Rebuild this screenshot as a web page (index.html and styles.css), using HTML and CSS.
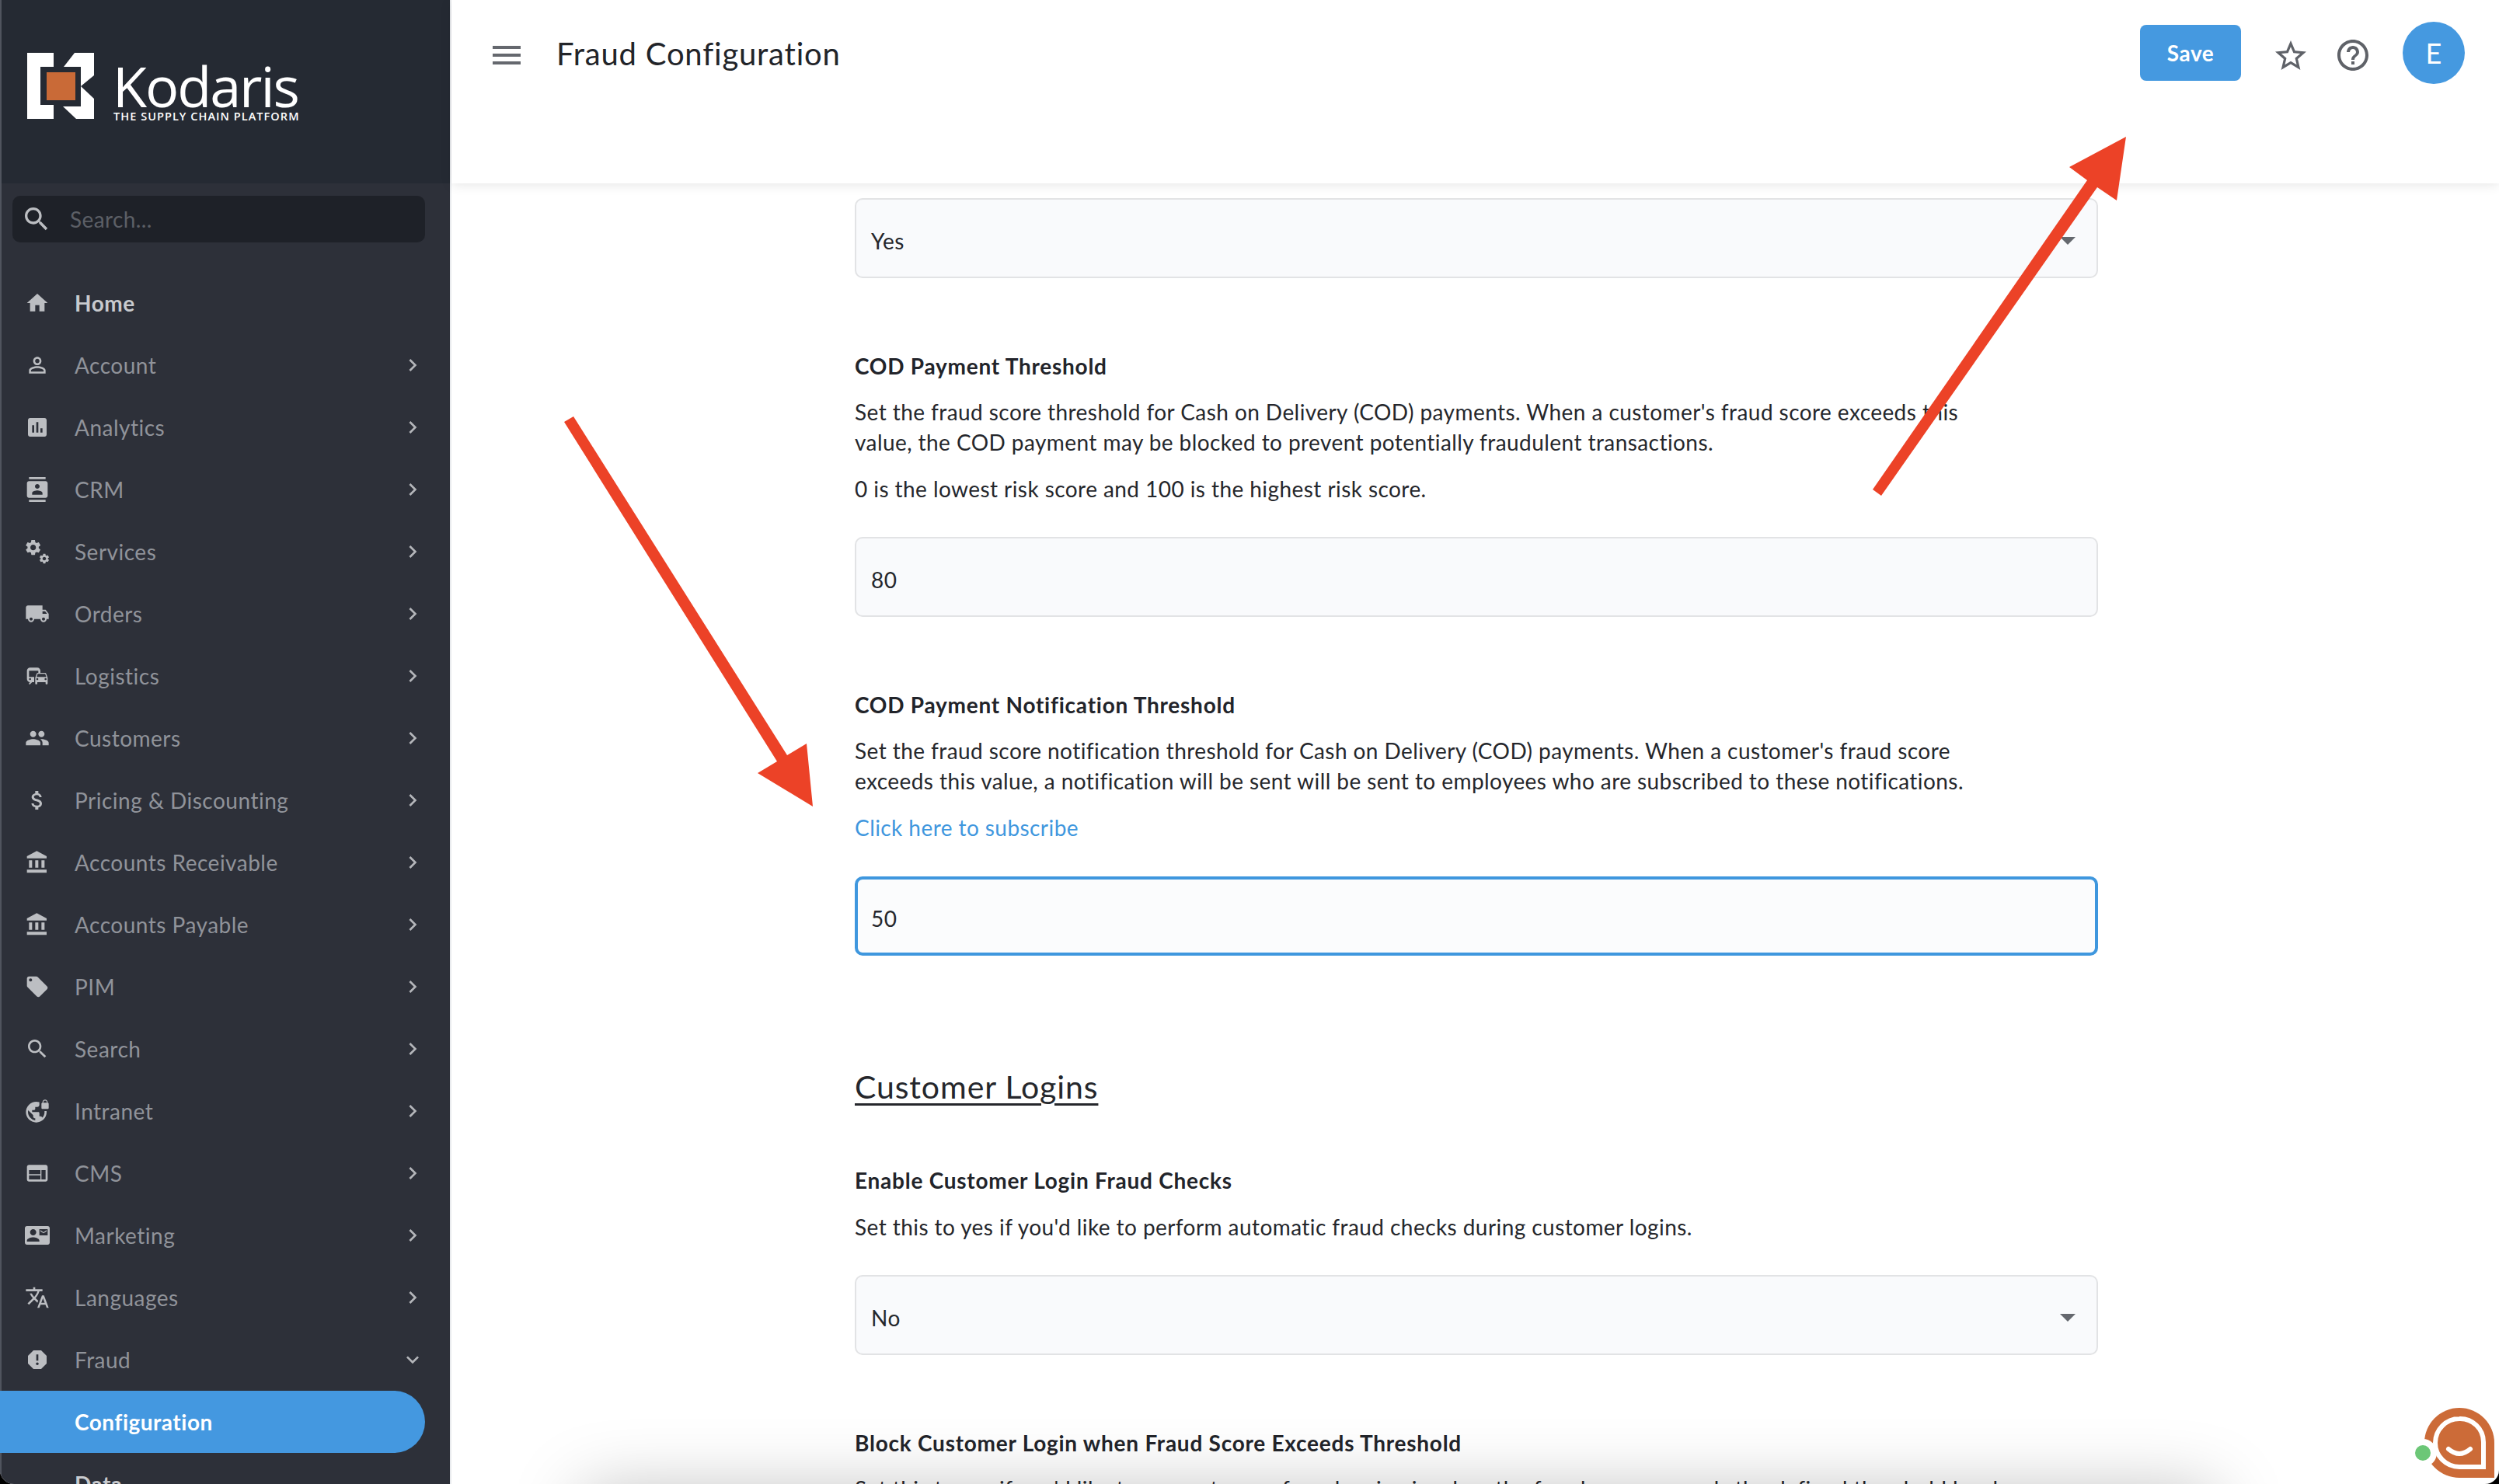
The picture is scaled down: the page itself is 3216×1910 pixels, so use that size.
FILE: index.html
```html
<!DOCTYPE html>
<html lang="en">
<head>
<meta charset="utf-8">
<title>Fraud Configuration</title>
<link rel="stylesheet" href="styles.css">
</head>
<body>
<svg class="defs" width="0" height="0" aria-hidden="true">
  <symbol id="i-home" viewBox="0 0 24 24"><path d="M10 20v-6h4v6h5v-8h3L12 3 2 12h3v8z"/></symbol>
  <symbol id="i-person" viewBox="0 0 24 24"><path d="M12 5.9c1.16 0 2.1.94 2.1 2.1s-.94 2.1-2.1 2.1S9.9 9.16 9.9 8s.94-2.1 2.1-2.1m0 9c2.97 0 6.1 1.46 6.1 2.1v1.1H5.9V17c0-.64 3.13-2.1 6.1-2.1M12 4C9.79 4 8 5.79 8 8s1.79 4 4 4 4-1.79 4-4-1.79-4-4-4zm0 9c-2.67 0-8 1.34-8 4v3h16v-3c0-2.66-5.33-4-8-4z"/></symbol>
  <symbol id="i-chart" viewBox="0 0 24 24"><path d="M19 3H5c-1.1 0-2 .9-2 2v14c0 1.1.9 2 2 2h14c1.1 0 2-.9 2-2V5c0-1.1-.9-2-2-2zM9 17H7v-7h2v7zm4 0h-2V7h2v10zm4 0h-2v-4h2v4z"/></symbol>
  <symbol id="i-contacts" viewBox="0 0 24 24"><path d="M20 0H4v2h16V0zM4 24h16v-2H4v2zM20 4H4c-1.1 0-2 .9-2 2v12c0 1.1.9 2 2 2h16c1.1 0 2-.9 2-2V6c0-1.1-.9-2-2-2zm-8 2.75c1.24 0 2.25 1.01 2.25 2.25s-1.01 2.25-2.25 2.25S9.75 10.24 9.75 9 10.76 6.75 12 6.75zM17 17H7v-1.5c0-1.67 3.33-2.5 5-2.5s5 .83 5 2.5V17z"/></symbol>
  <symbol id="i-gear" viewBox="0 0 24 24"><path d="M19.14 12.94c.04-.3.06-.61.06-.94 0-.32-.02-.64-.07-.94l2.03-1.58c.18-.14.23-.41.12-.61l-1.92-3.32c-.12-.22-.37-.29-.59-.22l-2.39.96c-.5-.38-1.03-.7-1.62-.94l-.36-2.54c-.04-.24-.24-.41-.48-.41h-3.84c-.24 0-.43.17-.47.41l-.36 2.54c-.59.24-1.13.57-1.62.94l-2.39-.96c-.22-.08-.47 0-.59.22L2.74 8.87c-.12.21-.08.47.12.61l2.03 1.58c-.05.3-.09.63-.09.94s.02.64.07.94l-2.03 1.58c-.18.14-.23.41-.12.61l1.92 3.32c.12.22.37.29.59.22l2.39-.96c.5.38 1.03.7 1.62.94l.36 2.54c.05.24.24.41.48.41h3.84c.24 0 .44-.17.47-.41l.36-2.54c.59-.24 1.13-.56 1.62-.94l2.39.96c.22.08.47 0 .59-.22l1.92-3.32c.12-.22.07-.47-.12-.61l-2.01-1.58zM12 15.6c-1.98 0-3.6-1.62-3.6-3.6s1.62-3.6 3.6-3.6 3.6 1.62 3.6 3.6-1.62 3.6-3.6 3.6z"/></symbol>
  <symbol id="i-gears" viewBox="0 0 24 24"><use href="#i-gear" x="-1" y="-1" width="18" height="18"/><use href="#i-gear" x="13" y="13" width="11.5" height="11.5"/></symbol>
  <symbol id="i-truck" viewBox="0 0 24 24"><path d="M20 8h-3V4H3c-1.1 0-2 .9-2 2v11h2c0 1.66 1.34 3 3 3s3-1.34 3-3h6c0 1.66 1.34 3 3 3s3-1.34 3-3h2v-5l-3-4zM6 18.5c-.83 0-1.5-.67-1.5-1.5s.67-1.5 1.5-1.5 1.5.67 1.5 1.5-.67 1.5-1.5 1.5zm13.5-9l1.96 2.5H17V9.5h2.5zm-1.5 9c-.83 0-1.5-.67-1.5-1.5s.67-1.5 1.5-1.5 1.5.67 1.5 1.5-.67 1.5-1.5 1.5z"/></symbol>
  <symbol id="i-commute" viewBox="0 0 24 24"><path d="M12 4H5C3.34 4 2 5.34 2 7v8c0 1.66 1.34 3 3 3l-1 1v1h1l2-2h2v-5H4V6.99L13 7v2h2V7c0-1.66-1.34-3-3-3zM5 14c.55 0 1 .45 1 1s-.45 1-1 1-1-.45-1-1 .45-1 1-1zm15.57-4.34c-.14-.4-.52-.66-.97-.66h-7.19c-.46 0-.83.26-.98.66L10 13.77l.01 5.51c0 .38.31.72.69.72h.62c.38 0 .68-.38.68-.76V18h8v1.24c0 .38.31.76.69.76h.61c.38 0 .69-.34.69-.72l.01-1.37v-4.14l-1.43-4.11zm-8.16.34h7.19l1.03 3h-9.25l1.03-3zM12 16c-.55 0-1-.45-1-1s.45-1 1-1 1 .45 1 1-.45 1-1 1zm8 0c-.55 0-1-.45-1-1s.45-1 1-1 1 .45 1 1-.45 1-1 1z"/></symbol>
  <symbol id="i-people" viewBox="0 0 24 24"><path d="M16 11c1.66 0 2.99-1.34 2.99-3S17.66 5 16 5c-1.66 0-3 1.34-3 3s1.34 3 3 3zm-8 0c1.66 0 2.99-1.34 2.99-3S9.66 5 8 5C6.34 5 5 6.34 5 8s1.34 3 3 3zm0 2c-2.33 0-7 1.17-7 3.5V19h14v-2.5c0-2.33-4.67-3.5-7-3.5zm8 0c-.29 0-.62.02-.97.05 1.16.84 1.97 1.97 1.97 3.45V19h6v-2.5c0-2.33-4.67-3.5-7-3.5z"/></symbol>
  <symbol id="i-money" viewBox="0 0 24 24"><path d="M11.8 10.9c-2.27-.59-3-1.2-3-2.15 0-1.09 1.01-1.85 2.7-1.85 1.78 0 2.44.85 2.5 2.1h2.21c-.07-1.72-1.12-3.3-3.21-3.81V3h-3v2.16c-1.94.42-3.5 1.68-3.5 3.61 0 2.31 1.91 3.46 4.7 4.13 2.5.6 3 1.48 3 2.41 0 .69-.49 1.79-2.7 1.79-2.06 0-2.87-.92-2.98-2.1h-2.2c.12 2.19 1.76 3.42 3.68 3.83V21h3v-2.15c1.95-.37 3.5-1.5 3.5-3.55 0-2.84-2.43-3.81-4.7-4.4z"/></symbol>
  <symbol id="i-bank" viewBox="0 0 24 24"><path d="M4 10v7h3v-7H4zm6 0v7h3v-7h-3zM2 22h19v-3H2v3zm14-12v7h3v-7h-3zm-4.500-9L2 6v2h19V6l-9.500-5z"/></symbol>
  <symbol id="i-tag" viewBox="0 0 24 24"><path d="M21.41 11.58l-9-9C12.05 2.22 11.55 2 11 2H4c-1.100 0-2 .9-2 2v7c0 .55.22 1.050.59 1.420l9 9c.36.36.86.58 1.410.58.55 0 1.050-.22 1.410-.59l7-7c.37-.36.59-.86.59-1.410 0-.55-.23-1.060-.59-1.420zM5.500 7C4.670 7 4 6.330 4 5.500S4.670 4 5.500 4 7 4.670 7 5.500 6.330 7 5.500 7z"/></symbol>
  <symbol id="i-search" viewBox="0 0 24 24"><path d="M15.500 14h-.79l-.28-.27C15.410 12.590 16 11.110 16 9.500 16 5.910 13.090 3 9.500 3S3 5.910 3 9.500 5.910 16 9.500 16c1.610 0 3.090-.59 4.230-1.570l.27.28v.79l5 4.990L20.490 19l-4.990-5zm-6 0C7.010 14 5 11.990 5 9.500S7.010 5 9.500 5 14 7.010 14 9.500 11.990 14 9.500 14z"/></symbol>
  <symbol id="i-vpn" viewBox="0 0 24 24"><path d="M22 4v-.5C22 2.120 20.880 1 19.500 1S17 2.120 17 3.500V4c-.55 0-1 .45-1 1v4c0 .55.45 1 1 1h5c.55 0 1-.45 1-1V5c0-.55-.45-1-1-1zm-.8 0h-3.400v-.5c0-.94.76-1.700 1.700-1.700s1.700.76 1.700 1.700V4zm-2.280 8c.04.33.08.66.08 1 0 2.080-.8 3.970-2.100 5.390-.26-.81-1-1.390-1.900-1.390h-1v-3c0-.55-.45-1-1-1H7v-2h2c.55 0 1-.45 1-1V8h2c1.100 0 2-.9 2-2V3.460c-.95-.3-1.950-.46-3-.46C5.480 3 1 7.480 1 13s4.480 10 10 10 10-4.480 10-10c0-.34-.02-.67-.05-1h-2.030zM10 20.930c-3.950-.49-7-3.850-7-7.930 0-.62.08-1.210.21-1.790L8 16v1c0 1.100.9 2 2 2v1.930z"/></symbol>
  <symbol id="i-web" viewBox="0 0 24 24"><path d="M20 4H4c-1.100 0-2 .9-2 2v12c0 1.100.9 2 2 2h16c1.100 0 2-.9 2-2V6c0-1.100-.9-2-2-2zm-5 14H4v-4h11v4zm0-5H4V9h11v4zm5 5h-4V9h4v9z"/></symbol>
  <symbol id="i-mail" viewBox="0 0 24 24"><path d="M21 8V7l-3 2-3-2v1l3 2 3-2zm1-5H2C.9 3 0 3.900 0 5v14c0 1.100.9 2 2 2h20c1.100 0 1.990-.9 1.990-2L24 5c0-1.100-.9-2-2-2zM8 6c1.660 0 3 1.340 3 3s-1.340 3-3 3-3-1.340-3-3 1.340-3 3-3zm6 12H2v-1c0-2 4-3.100 6-3.100s6 1.100 6 3.100v1zm8-6h-8V6h8v6z"/></symbol>
  <symbol id="i-translate" viewBox="0 0 24 24"><path d="M12.870 15.070l-2.540-2.510.03-.03c1.740-1.940 2.980-4.170 3.710-6.530H17V4h-7V2H8v2H1v1.990h11.170C11.500 7.920 10.440 9.750 9 11.350 8.070 10.320 7.300 9.190 6.690 8h-2c.73 1.630 1.730 3.170 2.980 4.560l-5.090 5.020L4 19l5-5 3.110 3.110.76-2.040zM18.500 10h-2L12 22h2l1.120-3h4.750L21 22h2l-4.500-12zm-2.620 7l1.620-4.330L19.120 17h-3.240z"/></symbol>
  <symbol id="i-report" viewBox="0 0 24 24"><path d="M15.730 3H8.270L3 8.270v7.460L8.270 21h7.460L21 15.730V8.270L15.730 3zM12 17.300c-.72 0-1.300-.58-1.300-1.300 0-.72.58-1.300 1.300-1.300.72 0 1.300.58 1.300 1.300 0 .72-.58 1.300-1.300 1.300zm1-4.300h-2V7h2v6z"/></symbol>
  <symbol id="i-right" viewBox="0 0 24 24"><path d="M10 6L8.590 7.410 13.170 12l-4.580 4.590L10 18l6-6z"/></symbol>
  <symbol id="i-down" viewBox="0 0 24 24"><path d="M16.590 8.590L12 13.170 7.410 8.590 6 10l6 6 6-6z"/></symbol>
</svg>

<div class="window">
  <aside class="sidebar">
    <div class="brand">
      <svg class="brand-mark" viewBox="0 0 86 85" aria-hidden="true">
        <path class="mark-white" d="M0 0H34V18H17V67H34V85H0Z"/>
        <path class="mark-white" d="M47 18L61 0H86V29L69 43L86 59V85H63L46 69H69V18Z"/>
        <rect class="mark-orange" x="25" y="25" width="37" height="36"/>
      </svg>
      <div class="brand-text">
        <div class="brand-name">Kodaris</div>
        <div class="brand-tag">THE SUPPLY CHAIN PLATFORM</div>
      </div>
    </div>
    <div class="side-body">
      <div class="side-search">
        <svg class="side-search-icon"><use href="#i-search"/></svg>
        <span class="side-search-text">Search...</span>
      </div>
      <nav class="nav">
        <a class="nav-item nav-home"><svg class="nav-icon"><use href="#i-home"/></svg><span class="nav-label">Home</span></a>
        <a class="nav-item"><svg class="nav-icon"><use href="#i-person"/></svg><span class="nav-label">Account</span><svg class="nav-arrow"><use href="#i-right"/></svg></a>
        <a class="nav-item"><svg class="nav-icon"><use href="#i-chart"/></svg><span class="nav-label">Analytics</span><svg class="nav-arrow"><use href="#i-right"/></svg></a>
        <a class="nav-item"><svg class="nav-icon"><use href="#i-contacts"/></svg><span class="nav-label">CRM</span><svg class="nav-arrow"><use href="#i-right"/></svg></a>
        <a class="nav-item"><svg class="nav-icon"><use href="#i-gears"/></svg><span class="nav-label">Services</span><svg class="nav-arrow"><use href="#i-right"/></svg></a>
        <a class="nav-item"><svg class="nav-icon"><use href="#i-truck"/></svg><span class="nav-label">Orders</span><svg class="nav-arrow"><use href="#i-right"/></svg></a>
        <a class="nav-item"><svg class="nav-icon"><use href="#i-commute"/></svg><span class="nav-label">Logistics</span><svg class="nav-arrow"><use href="#i-right"/></svg></a>
        <a class="nav-item"><svg class="nav-icon"><use href="#i-people"/></svg><span class="nav-label">Customers</span><svg class="nav-arrow"><use href="#i-right"/></svg></a>
        <a class="nav-item"><svg class="nav-icon"><use href="#i-money"/></svg><span class="nav-label">Pricing &amp; Discounting</span><svg class="nav-arrow"><use href="#i-right"/></svg></a>
        <a class="nav-item"><svg class="nav-icon"><use href="#i-bank"/></svg><span class="nav-label">Accounts Receivable</span><svg class="nav-arrow"><use href="#i-right"/></svg></a>
        <a class="nav-item"><svg class="nav-icon"><use href="#i-bank"/></svg><span class="nav-label">Accounts Payable</span><svg class="nav-arrow"><use href="#i-right"/></svg></a>
        <a class="nav-item"><svg class="nav-icon"><use href="#i-tag"/></svg><span class="nav-label">PIM</span><svg class="nav-arrow"><use href="#i-right"/></svg></a>
        <a class="nav-item"><svg class="nav-icon"><use href="#i-search"/></svg><span class="nav-label">Search</span><svg class="nav-arrow"><use href="#i-right"/></svg></a>
        <a class="nav-item"><svg class="nav-icon"><use href="#i-vpn"/></svg><span class="nav-label">Intranet</span><svg class="nav-arrow"><use href="#i-right"/></svg></a>
        <a class="nav-item"><svg class="nav-icon"><use href="#i-web"/></svg><span class="nav-label">CMS</span><svg class="nav-arrow"><use href="#i-right"/></svg></a>
        <a class="nav-item"><svg class="nav-icon"><use href="#i-mail"/></svg><span class="nav-label">Marketing</span><svg class="nav-arrow"><use href="#i-right"/></svg></a>
        <a class="nav-item"><svg class="nav-icon"><use href="#i-translate"/></svg><span class="nav-label">Languages</span><svg class="nav-arrow"><use href="#i-right"/></svg></a>
        <a class="nav-item"><svg class="nav-icon"><use href="#i-report"/></svg><span class="nav-label">Fraud</span><svg class="nav-arrow"><use href="#i-down"/></svg></a>
        <a class="nav-item nav-sub nav-active"><span class="nav-label">Configuration</span></a>
        <a class="nav-item nav-sub nav-data"><span class="nav-label">Data</span></a>
      </nav>
    </div>
  </aside>

  <main class="main">
    <header class="topbar">
      <svg class="menu-icon" viewBox="0 0 24 24"><path d="M3 18h18v-2H3v2zm0-5h18v-2H3v2zm0-7v2h18V6H3z"/></svg>
      <h1 class="page-title">Fraud Configuration</h1>
      <button class="save-btn">Save</button>
      <svg class="top-icon top-star" viewBox="0 0 24 24"><path d="M22 9.240l-7.190-.62L12 2 9.190 8.630 2 9.240l5.460 4.730L5.820 21 12 17.270 18.180 21l-1.630-7.030L22 9.240zM12 15.400l-3.760 2.270 1-4.280-3.320-2.880 4.380-.38L12 6.100l1.710 4.040 4.380.38-3.320 2.880 1 4.280L12 15.400z"/></svg>
      <svg class="top-icon top-help" viewBox="0 0 24 24"><path d="M11 18h2v-2h-2v2zm1-16C6.480 2 2 6.480 2 12s4.480 10 10 10 10-4.480 10-10S17.520 2 12 2zm0 18c-4.410 0-8-3.590-8-8s3.590-8 8-8 8 3.590 8 8-3.590 8-8 8zm0-14c-2.210 0-4 1.790-4 4h2c0-1.100.9-2 2-2s2 .9 2 2c0 2-3 1.750-3 5h2c0-2.250 3-2.500 3-5 0-2.210-1.790-4-4-4z"/></svg>
      <div class="avatar">E</div>
    </header>

    <section class="content">
      <div class="control select"><span>Yes</span><i class="caret"></i></div>

      <div class="label">COD Payment Threshold</div>
      <p class="desc">Set the fraud score threshold for Cash on Delivery (COD) payments. When a customer's fraud score exceeds this<br>value, the COD payment may be blocked to prevent potentially fraudulent transactions.</p>
      <p class="desc">0 is the lowest risk score and 100 is the highest risk score.</p>
      <div class="control"><span>80</span></div>

      <div class="label">COD Payment Notification Threshold</div>
      <p class="desc">Set the fraud score notification threshold for Cash on Delivery (COD) payments. When a customer's fraud score<br>exceeds this value, a notification will be sent will be sent to employees who are subscribed to these notifications.</p>
      <p class="desc"><a class="link">Click here to subscribe</a></p>
      <div class="control control-focus"><span>50</span></div>

      <h2 class="section-title">Customer Logins</h2>

      <div class="label label-first">Enable Customer Login Fraud Checks</div>
      <p class="desc">Set this to yes if you'd like to perform automatic fraud checks during customer logins.</p>
      <div class="control select"><span>No</span><i class="caret"></i></div>

      <div class="label">Block Customer Login when Fraud Score Exceeds Threshold</div>
      <p class="desc">Set this to yes if you'd like to prevent users from logging in when the fraud score exceeds the defined threshold level.</p>
    </section>
  </main>

  <svg class="arrows" viewBox="0 0 3216 1910" aria-hidden="true">
    <path class="arrow" d="M726 543L738 536L1013 972L1038 957L1046 1038L975 995L1000 980Z"/>
    <path class="arrow" d="M2410 630L2421 638L2699 241L2724 258L2736 176L2663 215L2686 232Z"/>
  </svg>

  <div class="bottom-shade"></div>

  <svg class="chat" viewBox="0 0 100 100" aria-hidden="true">
    <path class="chat-orange" d="M53 4A45 45 0 0 1 98 49V94H53A45 45 0 0 1 53 4Z"/>
    <path class="chat-ring" d="M53 18A30 30 0 0 1 84 48V80H53A31 31 0 0 1 53 18Z"/>
    <path class="chat-smile" d="M39 57Q53 69 67 57"/>
    <circle class="chat-halo" cx="6" cy="62" r="18"/>
    <circle class="chat-dot" cx="6" cy="62" r="10"/>
  </svg>
</div>
</body>
</html>
```
FILE: styles.css
```css
* { box-sizing: border-box; }
html, body { margin: 0; height: 100%; background: #000; overflow: hidden; }
body { font-family: "Lato", "Open Sans", sans-serif; color: #25272c; }
.defs { position: absolute; }

.window {
  position: relative;
  display: flex;
  width: 3216px;
  height: 1910px;
  overflow: hidden;
  background: #fff;
  border-radius: 0 0 18px 18px;
}

.sidebar {
  flex: 0 0 581px;
  height: 1910px;
  display: flex;
  flex-direction: column;
  background: #2d3039;
  box-shadow: inset 2px 0 0 #50545e, inset -2px 0 0 #e9ebee;
  overflow: hidden;
}
.brand {
  flex: 0 0 236px;
  margin-right: 2px;
  background: #252a33;
  box-shadow: inset 2px 0 0 #50545e;
  display: flex;
  align-items: flex-start;
  padding: 68px 0 0 35px;
  gap: 24px;
}
.brand-mark { width: 86px; height: 85px; }
.mark-white { fill: #fff; }
.mark-orange { fill: #c96a37; }
.brand-text { color: #fff; font-family: "Open Sans", sans-serif; white-space: nowrap; }
.brand-name { font-size: 72px; line-height: 62px; font-weight: 500; letter-spacing: -2.100px; margin-top: 11px; height: 63px; }
.brand-tag { font-size: 14.500px; line-height: 15px; font-weight: 600; letter-spacing: 1.050px; padding-left: 1px; }

.side-search {
  height: 60px;
  margin: 16px 34px 0 16px;
  border-radius: 10px;
  background: #1e2128;
  display: flex;
  align-items: center;
  padding-left: 11px;
  gap: 23px;
}
.side-search-icon { width: 40px; height: 40px; fill: #bcbec2; }
.side-search-text { font-size: 28px; color: #5c5f66; letter-spacing: .4px; }

.nav { margin-top: 38px; display: flex; flex-direction: column; }
.nav-item {
  height: 80px;
  display: flex;
  align-items: center;
  padding: 0 30px 0 32px;
  margin-right: 34px;
  color: #90939a;
  font-size: 28px;
  letter-spacing: .5px;
  white-space: nowrap;
}
.nav-icon { flex: 0 0 32px; width: 32px; height: 32px; fill: #bcbec2; margin-right: 32px; }
.nav-label { flex: 1; }
.nav-arrow { flex: 0 0 32px; width: 32px; height: 32px; fill: #b4b6ba; margin-right: -30px; }
.nav-home { color: #c8cace; font-weight: 700; }
.nav-sub { padding-left: 96px; font-weight: 700; color: #c8cace; }
.nav-active { background: #4498e0; color: #fff; border-radius: 0 40px 40px 0; }

.main { flex: 1; min-width: 0; display: flex; flex-direction: column; }
.topbar {
  position: relative;
  z-index: 2;
  flex: 0 0 236px;
  display: flex;
  align-items: flex-start;
  background: #fff;
  box-shadow: 0 2px 14px rgba(0, 0, 0, .10);
  padding: 28px 44px 0 47px;
}
.menu-icon { width: 48px; height: 48px; fill: #65686e; margin-top: 19px; }
.page-title { flex: 1; margin: 7px 0 0 40px; font-size: 40px; line-height: 68px; font-weight: 400; color: #222429; letter-spacing: .8px; }
.save-btn {
  width: 130px;
  height: 72px;
  margin: 4px 40px 0 0;
  border: 0;
  border-radius: 8px;
  background: #4599e0;
  color: #fff;
  font: 700 28px "Lato", sans-serif;
  letter-spacing: .5px;
}
.top-icon { width: 48px; height: 48px; fill: #5f6268; }
.top-star { margin-top: 20px; }
.top-help { margin: 19px 40px 0 32px; }
.avatar {
  width: 80px;
  height: 80px;
  border-radius: 50%;
  background: #4599e0;
  color: #fff;
  font-size: 36px;
  display: flex;
  align-items: center;
  justify-content: center;
}

.content { padding: 19px 0 0 519px; white-space: nowrap; }
.control {
  position: relative;
  width: 1600px;
  height: 103px;
  margin-top: 42.500px;
  display: flex;
  align-items: center;
  padding: 6px 19px 0;
  background: #f9fafc;
  border: 2px solid #e2e3e5;
  border-radius: 10px;
  font-size: 28px;
  letter-spacing: .5px;
}
.content > .control:first-child { margin-top: 0; }
.control-focus { margin-top: 43.500px; border: 4px solid #3f97de; background: #fbfcfd; padding-left: 17px; height: 102px; }
.caret {
  position: absolute;
  right: 27px;
  top: 48px;
  border-left: 10px solid transparent;
  border-right: 10px solid transparent;
  border-top: 10px solid #65686e;
}
.label { margin-top: 93.500px; font-size: 28px; line-height: 39px; font-weight: 700; letter-spacing: .75px; color: #22242a; }
.label-first { margin-top: 73px; }
.desc { margin: 20.500px 0 0; font-size: 28px; line-height: 39px; letter-spacing: .43px; }
.link { color: #3f97de; }
.section-title { margin: 141px 0 0; font-size: 41px; line-height: 56px; font-weight: 400; text-decoration: underline; text-decoration-thickness: 3px; text-underline-offset: 6px; letter-spacing: .9px; }

.arrows { position: absolute; inset: 0; width: 3216px; height: 1910px; z-index: 3; }
.arrow { fill: #ec4227; }

.bottom-shade {
  position: absolute;
  z-index: 4;
  left: 790px;
  width: 2020px;
  top: 1960px;
  height: 100px;
  box-shadow: 0 0 90px 40px rgba(0, 0, 0, .26);
}

.chat { position: absolute; z-index: 5; left: 3112px; top: 1808px; width: 100px; height: 100px; overflow: visible; }
.chat-orange { fill: #cc6b38; }
.chat-ring { fill: none; stroke: #fff; stroke-width: 6; }
.chat-smile { fill: none; stroke: #fff; stroke-width: 6; stroke-linecap: round; }
.chat-halo { fill: #fff; }
.chat-dot { fill: #6cc777; }
```
